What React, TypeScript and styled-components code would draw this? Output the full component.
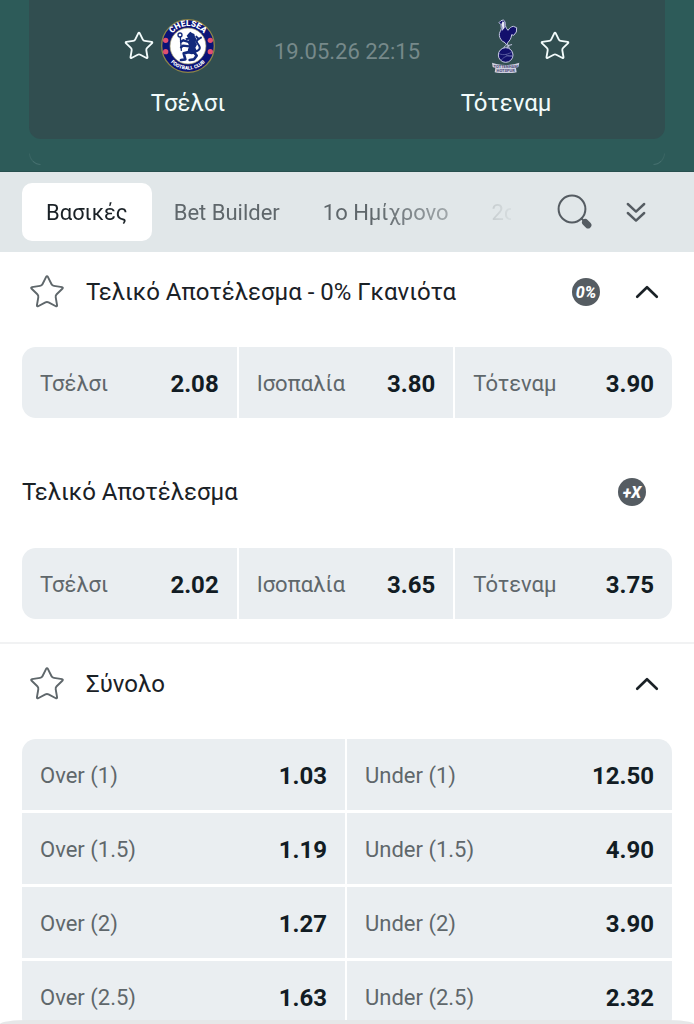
import { useState } from 'react';
import { Star } from 'lucide-react';
import styled, { ThemeProvider, createGlobalStyle } from 'styled-components';

const theme = {
  colors: {
    header: '#2d5b59',
    headerCard: '#314e50',
    headerText: '#f2fbfb',
    headerMuted: '#76898a',
    tabBar: '#e1e7e9',
    cell: '#eaeef1',
    text: '#1a2126',
    odds: '#121c24',
    muted: '#5f676b',
    icon: '#555c62',
    divider: '#f1f2f3',
    white: '#ffffff',
  },
  fontSize: {
    md: '22px',
    lg: '24px',
  },
};

type AppTheme = typeof theme;

declare module 'styled-components' {
  export interface DefaultTheme extends AppTheme {}
}

const GlobalStyles = createGlobalStyle`
  * {
    box-sizing: border-box;
  }

  body {
    margin: 0;
    background-color: ${theme.colors.white};
    color: ${theme.colors.text};
    font-family: Roboto, 'Noto Sans', sans-serif;
  }

  button {
    margin: 0;
    padding: 0;
    border: none;
    background: none;
    color: inherit;
    font: inherit;
    cursor: pointer;
  }
`;

const Page = styled.div`
  height: 100vh;
  overflow: hidden;
`;

const MatchHeader = styled.header`
  background-color: ${({ theme }) => theme.colors.header};
  border-bottom: 1px solid #28504f;
`;

const MatchCard = styled.div`
  display: flex;
  justify-content: space-between;
  margin: 0 29px;
  padding: 19px 94px 22px;
  border-radius: 0 0 12px 12px;
  background-color: ${({ theme }) => theme.colors.headerCard};
`;

const Team = styled.div`
  display: flex;
  flex-direction: column;
  align-items: center;
  gap: 16px;
`;

const TeamTop = styled.div<{ $reverse?: boolean }>`
  display: grid;
  grid-template-columns: 32px 54px 32px;
  align-items: center;
  gap: 6px;

  & > svg {
    grid-column: 2;
    grid-row: 1;
  }

  & > button {
    grid-column: ${({ $reverse }) => ($reverse ? 3 : 1)};
    grid-row: 1;
  }
`;

const TeamName = styled.span`
  color: ${({ theme }) => theme.colors.headerText};
  font-size: ${({ theme }) => theme.fontSize.lg};
  line-height: 28px;
`;

const KickOff = styled.time`
  padding-top: 20px;
  color: ${({ theme }) => theme.colors.headerMuted};
  font-size: ${({ theme }) => theme.fontSize.md};
  line-height: 26px;
`;

const IconButton = styled.button`
  display: flex;
  align-items: center;
  justify-content: center;
  flex-shrink: 0;
`;

const CardEdge = styled.div`
  display: flex;
  justify-content: space-between;
  margin: 0 29px;
  padding: 14px 0 6px;
`;

const Corner = styled.span<{ $side: 'left' | 'right' }>`
  width: 12px;
  height: 12px;
  border: 1px solid transparent;
  border-bottom-color: #477170;
  border-${({ $side }) => $side}-color: #3b6664;
  border-bottom-${({ $side }) => $side}-radius: 12px;
`;

const TabBar = styled.nav`
  display: flex;
  align-items: center;
  height: 80px;
  padding: 0 47px 0 22px;
  background-color: ${({ theme }) => theme.colors.tabBar};
`;

const TabList = styled.div`
  display: flex;
  flex: 1;
  min-width: 0;
  overflow: hidden;
  mask-image: linear-gradient(to right, #000 72%, transparent 102%);
`;

const Tab = styled.button<{ $active: boolean }>`
  flex-shrink: 0;
  height: 58px;
  padding: 0 24px;
  margin-right: ${({ $active }) => ($active ? '-2px' : '-5px')};
  border-radius: 10px;
  background-color: ${({ $active, theme }) => ($active ? theme.colors.white : 'transparent')};
  color: ${({ $active, theme }) => ($active ? theme.colors.text : theme.colors.muted)};
  font-size: ${({ theme }) => theme.fontSize.md};
  white-space: nowrap;
`;

const TabActions = styled.div`
  display: flex;
  align-items: center;
  gap: 32px;
  padding-left: 46px;
`;

const Market = styled.section`
  padding-bottom: 23px;
  border-bottom: 2px solid ${({ theme }) => theme.colors.divider};
`;

const MarketHeader = styled.div`
  display: flex;
  align-items: center;
  height: 80px;
  margin-bottom: 15px;
  padding: 0 34px 0 28px;
`;

const SubMarketHeader = styled(MarketHeader)`
  margin: 34px 0 16px;
  padding: 0 48px 0 22px;
`;

const MarketTitle = styled.h2<{ $indent?: boolean }>`
  flex: 1;
  margin: 0;
  padding-left: ${({ $indent }) => ($indent ? '20px' : '0')};
  font-size: ${({ theme }) => theme.fontSize.lg};
  font-weight: 400;
  line-height: 28px;
`;

const Badge = styled.span`
  display: flex;
  align-items: center;
  justify-content: center;
  width: 28px;
  height: 28px;
  border-radius: 50%;
  background-color: ${({ theme }) => theme.colors.icon};
  color: ${({ theme }) => theme.colors.white};
  font-size: 16px;
  font-style: italic;
  font-weight: 800;
`;

const MarketActions = styled.div`
  display: flex;
  align-items: center;
  gap: 34px;
`;

const OddsGrid = styled.div<{ $columns: number }>`
  display: grid;
  grid-template-columns: repeat(${({ $columns }) => $columns}, 1fr);
  row-gap: 3px;
  margin: 0 22px;
  border-radius: 14px;
  overflow: hidden;

  & > button:not(:nth-child(${({ $columns }) => $columns}n)) {
    border-right: 2px solid ${({ theme }) => theme.colors.white};
  }
`;

const OddsButton = styled.button`
  display: flex;
  align-items: center;
  justify-content: space-between;
  height: 71px;
  padding: 2px 18px 0;
  background-color: ${({ theme }) => theme.colors.cell};
`;

const Selection = styled.span`
  color: ${({ theme }) => theme.colors.muted};
  font-size: ${({ theme }) => theme.fontSize.md};
`;

const Price = styled.span`
  color: ${({ theme }) => theme.colors.odds};
  font-size: ${({ theme }) => theme.fontSize.lg};
  font-weight: 700;
`;

const BottomSheet = styled.div`
  position: fixed;
  right: 0;
  bottom: 0;
  left: 0;
  height: 4px;
  border-radius: 30px 30px 0 0 / 4px 4px 0 0;
  background-color: #e6e7e8;
`;

function ChelseaCrest() {
  return (
    <svg width="54" height="54" viewBox="0 0 162 162" role="img" aria-label="Chelsea">
      <defs>
        <path id="chelsea-top" d="M21 81a60 60 0 0 1 120 0" />
        <path id="chelsea-bottom" d="M10 81a71 71 0 0 0 142 0" />
      </defs>
      <circle cx="81" cy="81" r="79" fill="#0b1377" stroke="#8d8448" strokeWidth="4" />
      <circle cx="81" cy="81" r="54" fill="#fff" stroke="#9c965f" strokeWidth="2" />
      <g fill="#fff" fontFamily="Roboto, sans-serif" fontWeight="900" textAnchor="middle">
        <text fontSize="25">
          <textPath href="#chelsea-top" startOffset="50%">CHELSEA</textPath>
        </text>
        <text fontSize="15">
          <textPath href="#chelsea-bottom" startOffset="50%">FOOTBALL CLUB</textPath>
        </text>
      </g>
      <g fill="#e0506f">
        <circle cx="14" cy="64" r="8" />
        <circle cx="14" cy="98" r="8" />
        <circle cx="148" cy="64" r="8" />
        <circle cx="148" cy="98" r="8" />
      </g>
      <g fill="none" stroke="#12297c" strokeLinecap="round" strokeLinejoin="round">
        <circle cx="57" cy="48" r="6" strokeWidth="4" />
        <path d="M58 54l3 40" strokeWidth="4" />
        <path d="M100 98c14-2 21-10 13-20s-8-14 1-18M113 60l-7-7M113 60l7-4" strokeWidth="6" />
        <path d="M88 70L67 64M85 82L66 80M67 64l-7 4M66 80l-6 5" strokeWidth="7" />
        <path d="M88 98l-20 5 5 18-13 2M99 100l8 10-8 11-13 2" strokeWidth="8" />
      </g>
      <path
        d="M77 50l7-8 4-4 5 4 7 3 2 8 5 8-3 8 4 8-5 9 5 10-4 8-13 2-11-3 1-12 4-9-5-12 5-8-9 1-3-5 8-2z"
        fill="#12297c"
      />
    </svg>
  );
}

function TottenhamCrest() {
  return (
    <svg width="54" height="54" viewBox="0 18 162 162" role="img" aria-label="Tottenham Hotspur">
      <g stroke="#c6c9e4" strokeWidth="3" strokeLinejoin="round">
        <path d="M79 98l-5 7M88 96l3 12M84 88l1 18M90 97l8-2" fill="none" strokeLinecap="round" />
        <path
          d="M60 29l6-6 7-2 5 5 1 12c2 6 4 10 8 14 5-7 9-11 16-12l10 4-1 13-8 10-6-2c-1 11-6 18-11 23l-4 8-5-7c-10-4-16-12-17-22-1-8 5-14 6-20l-1-12z"
          fill="#12106c"
        />
        <circle cx="80" cy="126" r="22" fill="#12106c" />
      </g>
      <path d="M71 25l5 3 1 16-9 11c4-9 1-17-1-21z" fill="#e8e8f5" />
      <path d="M60 122c14 6 28 2 40-6M67 141c8-10 20-15 34-13M80 125c8 5 15 6 20 5" fill="none" stroke="#7377b2" strokeWidth="2" />
      <path d="M39 149l13 4c18 4 38 4 56 0l13-4-3 13-7 4 2 12c-22 4-44 4-66 0l2-12-8-4z" fill="#cfcfe0" />
      <g fill="#4b4b76" fontFamily="Roboto, sans-serif" fontWeight="700" textAnchor="middle">
        <text x="80" y="164" fontSize="12">TOTTENHAM</text>
        <text x="80" y="177" fontSize="12">HOTSPUR</text>
      </g>
    </svg>
  );
}

function SearchIcon() {
  return (
    <svg width="36" height="36" viewBox="0 0 36 36" fill="none" stroke={theme.colors.icon} strokeLinecap="round">
      <circle cx="15" cy="15" r="13.4" strokeWidth="2" />
      <path d="M24.5 24.5l3 3" strokeWidth="2" />
      <path d="M28.3 28.3l2.8 2.8" strokeWidth="6.6" />
    </svg>
  );
}

function ExpandAllIcon() {
  return (
    <svg
      width="22"
      height="22"
      viewBox="0 0 22 22"
      fill="none"
      stroke={theme.colors.icon}
      strokeWidth="2.4"
      strokeLinecap="round"
      strokeLinejoin="round"
    >
      <path d="M2.8 3l8.2 7.6L19.2 3M2.8 12l8.2 7.6 8.2-7.6" />
    </svg>
  );
}

function CollapseIcon() {
  return (
    <svg
      width="26"
      height="16"
      viewBox="0 0 26 16"
      fill="none"
      stroke={theme.colors.text}
      strokeWidth="2.6"
      strokeLinecap="round"
      strokeLinejoin="round"
    >
      <path d="M3.2 12.8L13 3.2l9.8 9.6" />
    </svg>
  );
}

interface Odd {
  label: string;
  price: string;
}

const tabs = ['Βασικές', 'Bet Builder', '1ο Ημίχρονο', '2ο Ημίχρονο'];

const noMarginResult: Odd[] = [
  { label: 'Τσέλσι', price: '2.08' },
  { label: 'Ισοπαλία', price: '3.80' },
  { label: 'Τότεναμ', price: '3.90' },
];

const finalResult: Odd[] = [
  { label: 'Τσέλσι', price: '2.02' },
  { label: 'Ισοπαλία', price: '3.65' },
  { label: 'Τότεναμ', price: '3.75' },
];

const totals: Odd[] = [
  { label: 'Over (1)', price: '1.03' },
  { label: 'Under (1)', price: '12.50' },
  { label: 'Over (1.5)', price: '1.19' },
  { label: 'Under (1.5)', price: '4.90' },
  { label: 'Over (2)', price: '1.27' },
  { label: 'Under (2)', price: '3.90' },
  { label: 'Over (2.5)', price: '1.63' },
  { label: 'Under (2.5)', price: '2.32' },
];

function OddsTable({ odds, columns }: { odds: Odd[]; columns: number }) {
  return (
    <OddsGrid $columns={columns}>
      {odds.map((odd) => (
        <OddsButton key={odd.label} type="button">
          <Selection>{odd.label}</Selection>
          <Price>{odd.price}</Price>
        </OddsButton>
      ))}
    </OddsGrid>
  );
}

function AppContent() {
  const [activeTab, setActiveTab] = useState(tabs[0]);

  return (
    <Page>
      <MatchHeader>
        <MatchCard>
          <Team>
            <TeamTop>
              <IconButton type="button" aria-label="Αγαπημένο Τσέλσι">
                <Star size={32} color={theme.colors.headerText} strokeWidth={1.4} />
              </IconButton>
              <ChelseaCrest />
            </TeamTop>
            <TeamName>Τσέλσι</TeamName>
          </Team>
          <KickOff dateTime="2026-05-19T22:15">19.05.26 22:15</KickOff>
          <Team>
            <TeamTop $reverse>
              <TottenhamCrest />
              <IconButton type="button" aria-label="Αγαπημένο Τότεναμ">
                <Star size={32} color={theme.colors.headerText} strokeWidth={1.4} />
              </IconButton>
            </TeamTop>
            <TeamName>Τότεναμ</TeamName>
          </Team>
        </MatchCard>
        <CardEdge>
          <Corner $side="left" />
          <Corner $side="right" />
        </CardEdge>
      </MatchHeader>

      <TabBar>
        <TabList role="tablist">
          {tabs.map((tab) => (
            <Tab
              key={tab}
              type="button"
              role="tab"
              aria-selected={tab === activeTab}
              $active={tab === activeTab}
              onClick={() => setActiveTab(tab)}
            >
              {tab}
            </Tab>
          ))}
        </TabList>
        <TabActions>
          <IconButton type="button" aria-label="Αναζήτηση">
            <SearchIcon />
          </IconButton>
          <IconButton type="button" aria-label="Ανάπτυξη όλων">
            <ExpandAllIcon />
          </IconButton>
        </TabActions>
      </TabBar>

      <main>
        <Market>
          <MarketHeader>
            <IconButton type="button" aria-label="Αγαπημένη αγορά">
              <Star size={38} color={theme.colors.muted} strokeWidth={1.2} />
            </IconButton>
            <MarketTitle $indent>Τελικό Αποτέλεσμα - 0% Γκανιότα</MarketTitle>
            <MarketActions>
              <Badge>0%</Badge>
              <IconButton type="button" aria-label="Σύμπτυξη">
                <CollapseIcon />
              </IconButton>
            </MarketActions>
          </MarketHeader>
          <OddsTable odds={noMarginResult} columns={3} />

          <SubMarketHeader>
            <MarketTitle>Τελικό Αποτέλεσμα</MarketTitle>
            <Badge>+X</Badge>
          </SubMarketHeader>
          <OddsTable odds={finalResult} columns={3} />
        </Market>

        <Market>
          <MarketHeader>
            <IconButton type="button" aria-label="Αγαπημένη αγορά">
              <Star size={38} color={theme.colors.muted} strokeWidth={1.2} />
            </IconButton>
            <MarketTitle $indent>Σύνολο</MarketTitle>
            <IconButton type="button" aria-label="Σύμπτυξη">
              <CollapseIcon />
            </IconButton>
          </MarketHeader>
          <OddsTable odds={totals} columns={2} />
        </Market>
      </main>
      <BottomSheet />
    </Page>
  );
}

function App() {
  return (
    <ThemeProvider theme={theme}>
      <GlobalStyles />
      <AppContent />
    </ThemeProvider>
  );
}

export default App;
